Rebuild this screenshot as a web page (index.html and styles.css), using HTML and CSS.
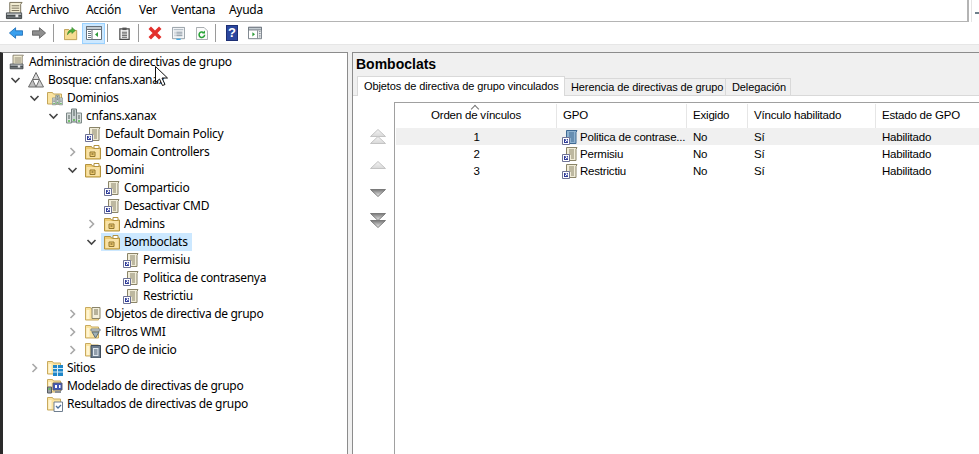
FILE: index.html
```html
<!DOCTYPE html>
<html lang="es">
<head>
    <meta charset="UTF-8">
    <title>Administración de directivas de grupo</title>
    <link rel="stylesheet" href="styles.css">
</head>
<body>
    <svg class="defs" width="0" height="0">
        <defs>
            <symbol id="open" viewBox="0 0 12 12"><path d="M2 4l4 4 4-4" fill="none" stroke="#454545" stroke-width="1.6"/></symbol>
            <symbol id="closed" viewBox="0 0 12 12"><path d="M4 2l4 4-4 4" fill="none" stroke="#a8a8a8" stroke-width="1.6"/></symbol>
            <symbol id="gpm" viewBox="0 0 20 20">
                <path d="M5 1.500h13l-1.500 2v10H5z" fill="#f1ecd2" stroke="#77705a"/>
                <path d="M7 5h8M7 7.500h8M7 10h8" stroke="#77705a"/>
                <path d="M1.500 12.500h16v3h-16z" fill="#aeb3b5" stroke="#4c5155"/>
                <path d="M1.500 15.500h16v3h-16z" fill="#6c7276" stroke="#3d4245"/>
                <path d="M11 14h3v3h-3z" fill="#e8e8e8"/>
            </symbol>
            <symbol id="gpo" viewBox="0 0 16 16">
                <path d="M4.500 1.500h10.500l-1 2V14.500H4.500z" fill="var(--paper, #f0ecd8)" stroke="var(--line, #8a8468)"/>
                <path d="M7 4h5M7 6h5M7 8h5M9 10h3M9 12h3" stroke="var(--line, #8a8468)"/>
                <path d="M.5 8.500h7v7h-7z" fill="#fff" stroke="#6f7396"/>
                <path d="M2 10h4v4H2z" fill="#2f3c9a"/>
                <path d="M3 13l2-2M3.500 10.800H5V12.500" fill="none" stroke="#fff"/>
            </symbol>
            <symbol id="ou" viewBox="0 0 16 16">
                <path d="M.5 2.500h6l1 1.500h8v11H.5z" fill="#eecb72" stroke="#b3933f"/>
                <path d="M1.500 5h13v9h-13z" fill="#f8e2a6"/>
                <path d="M9 1.500h5v3H9z" fill="#fff" stroke="#b3933f"/>
                <path d="M5 8h5v4.500H5z" fill="#eecb72" stroke="#94782f"/>
                <path d="M6.500 10h2" stroke="#5c4a1a"/>
            </symbol>
            <symbol id="servers" viewBox="0 0 16 16">
                <path d="M5.500 1h5v13h-5z" fill="#c8d0d0" stroke="#6d7a78"/>
                <path d="M.5 5h5v10h-5zM10.500 5h5v10h-5z" fill="#d8dddc" stroke="#7c8886"/>
                <path d="M7 3h2M7 5h2M7 7h2M2 8h2M2 10h2M12 8h2M12 10h2" stroke="#55625f"/>
                <path d="M2 13h2M12 13h2M7 12h2" stroke="#52b848" stroke-width="1.500"/>
            </symbol>
            <symbol id="foldersrv" viewBox="0 0 16 16">
                <path d="M.5 2.500h5l1 1.500h8v10H.5z" fill="#fbe4a0" stroke="#c4a65a"/>
                <use href="#servers" x="5" y="4" width="11" height="12"/>
            </symbol>
            <symbol id="forest" viewBox="0 0 16 16">
                <path d="M8 .5l3.500 7h-7z" fill="#d8d8d8" stroke="#6b6b6b"/>
                <path d="M4.500 7.500l3.500 7.500H.5z" fill="#bdbdbd" stroke="#6b6b6b"/>
                <path d="M11.500 7.500l4 7.500h-7.500z" fill="#cfcfcf" stroke="#6b6b6b"/>
            </symbol>
            <symbol id="folder" viewBox="0 0 16 16">
                <path d="M.5 1.500h5l1 1.500h7v11H.5z" fill="#fbe4a0" stroke="#c8aa5e"/>
                <path d="M1.500 4h3v9h-3z" fill="#fff5d2"/>
            </symbol>
            <symbol id="fold-gpo" viewBox="0 0 16 16">
                <use href="#folder" width="16" height="16"/>
                <path d="M7 1.500h8v11H7z" fill="#f3efdc" stroke="#8a8468"/>
                <path d="M9 4h4M9 6h4M9 8h4" stroke="#7a7458"/>
            </symbol>
            <symbol id="fold-wmi" viewBox="0 0 16 16">
                <use href="#folder" width="16" height="16"/>
                <path d="M6 5h9v2H6z" fill="#dfe3e5" stroke="#7b8488"/>
                <path d="M7 8h7l-3.500 6z" fill="#9fb0b6" stroke="#5e6c72"/>
            </symbol>
            <symbol id="fold-start" viewBox="0 0 16 16">
                <use href="#folder" width="16" height="16"/>
                <path d="M6 3.500h9.500V16H6z" fill="#6d7d8e" stroke="#3f4c59"/>
                <path d="M8 6h5.500v8H8z" fill="#dfe7ee"/>
                <path d="M9 8h3.500M9 10h3.500M9 12h3.500" stroke="#44566a"/>
            </symbol>
            <symbol id="fold-site" viewBox="0 0 16 16">
                <use href="#folder" width="16" height="16"/>
                <path d="M6 5h10v11H6z" fill="#1f86c8"/>
                <path d="M6 8.500h10M6 12h10M10.500 5v11" stroke="#d8eefa"/>
            </symbol>
            <symbol id="model" viewBox="0 0 16 16">
                <use href="#folder" width="16" height="16"/>
                <path d="M6 5h9v7H6z" fill="#3f57b8" stroke="#5a5f70"/>
                <path d="M8 7h2v3H8zM12 7h1.500v3H12z" fill="#fff"/>
                <path d="M.5 9h4v6h-4z" fill="#9a9fa5" stroke="#555a60"/>
                <path d="M1.500 11h2" stroke="#55c04a" stroke-width="1.500"/>
                <path d="M8 13h6v2H8z" fill="#8b9096"/>
            </symbol>
            <symbol id="result" viewBox="0 0 16 16">
                <use href="#folder" width="16" height="16"/>
                <path d="M7 6h8.500v9.500H7z" fill="#fff" stroke="#6f7f90"/>
                <path d="M9 10l2 2 3-3" fill="none" stroke="#4a6f9a" stroke-width="1.300"/>
            </symbol>
            <symbol id="back" viewBox="0 0 16 14"><path d="M.5 7L7.500 1v3.500h8v5h-8V13z" fill="var(--arrow, #3aa0ee)" stroke="var(--edge, #1f6fb8)"/></symbol>
            <symbol id="up-tri" viewBox="0 0 16 8"><path d="M8 .5L15.500 7.500H.5z" fill="url(#triUp)" stroke="#c4c4c4"/></symbol>
            <symbol id="down-tri" viewBox="0 0 16 8"><path d="M.5 .5h15L8 7.500z" fill="url(#triDown)" stroke="#7a7a7a"/></symbol>
            <linearGradient id="triUp" x1="0" y1="0" x2="0" y2="1"><stop offset="0" stop-color="#f4f4f4"/><stop offset="1" stop-color="#d8d8d8"/></linearGradient>
            <linearGradient id="triDown" x1="0" y1="0" x2="0" y2="1"><stop offset="0" stop-color="#777"/><stop offset="1" stop-color="#eee"/></linearGradient>
        </defs>
    </svg>

    <div class="topbar">
        <div class="menubar">
            <svg class="app-icon"><use href="#gpm"/></svg>
            <span class="menu m-archivo">Archivo</span>
            <span class="menu m-accion">Acción</span>
            <span class="menu m-ver">Ver</span>
            <span class="menu m-ventana">Ventana</span>
            <span class="menu">Ayuda</span>
        </div>
        <div class="corner"><span class="dash"></span></div>
    </div>

    <div class="toolbar">
        <button class="tool t-back"><svg width="16" height="14"><use href="#back"/></svg></button>
        <button class="tool t-fwd"><svg class="flip" width="16" height="14"><use href="#back"/></svg></button>
        <span class="sep"></span>
        <button class="tool t-up">
            <svg width="16" height="15" viewBox="0 0 16 15"><path d="M.5 3h5l1 1h8v10.500H.5z" fill="#f6dc92" stroke="#b9994c"/><path d="M4 9c0-4 3-6 5-6V.5L13 4 9 7.500V5.500C7 5.500 5 7 4 9z" fill="#4fae3c" stroke="#2e7d22" stroke-width=".6"/></svg>
        </button>
        <button class="tool t-active">
            <svg width="16" height="14" viewBox="0 0 16 14"><path d="M.5 .5h15v13H.5z" fill="#fff" stroke="#68717a"/><path d="M.5 .5h15v3H.5z" fill="#c4ccd2" stroke="#68717a"/><path d="M2 5.500h3M2 7.500h3M2 9.500h3M2 11.500h3" stroke="#6a7780"/><path d="M6 4v9" stroke="#68717a"/><path d="M12 6v5L9 8.500z" fill="#2f9c3a"/></svg>
        </button>
        <span class="sep"></span>
        <button class="tool t-clip">
            <svg width="13" height="15" viewBox="0 0 13 15"><path d="M1 2h11v12.500H1z" fill="#f4f4f4" stroke="#4a4a4a" stroke-width="1.400"/><path d="M4 .5h5v3H4z" fill="#555"/><path d="M3.500 6h6M3.500 8h6M3.500 10h6M3.500 12h6" stroke="#4a4a4a"/></svg>
        </button>
        <span class="sep"></span>
        <button class="tool t-del">
            <svg width="16" height="16" viewBox="0 0 16 16"><path d="M2 2l12 12M14 2L2 14" stroke="#e3312d" stroke-width="4"/></svg>
        </button>
        <button class="tool t-prop">
            <svg width="15" height="15" viewBox="0 0 15 15"><path d="M.5 .5h14v13H.5z" fill="#f3f5f7" stroke="#8a949c"/><path d="M2 3h11" stroke="#b7c0c7" stroke-width="1.500"/><path d="M3 6h1M5 6h7M3 8h1M5 8h7M3 10h1M5 10h7" stroke="#7b8a96"/><path d="M5 14.200h5" stroke="#39a7e6" stroke-width="1.500"/></svg>
        </button>
        <button class="tool t-ref">
            <svg width="14" height="15" viewBox="0 0 14 15"><path d="M.5 .5h9l4 4v10H.5z" fill="#fbfbfb" stroke="#9aa0a4"/><path d="M10 9a3.200 3.200 0 1 1-1-2.300" fill="none" stroke="#27a336" stroke-width="1.800"/><path d="M10.500 4v3.500H7z" fill="#27a336"/></svg>
        </button>
        <span class="sep"></span>
        <button class="tool t-help"><span class="help-icon">?</span></button>
        <button class="tool t-show">
            <svg width="16" height="14" viewBox="0 0 16 14"><path d="M.5 .5h15v13H.5z" fill="#fff" stroke="#68717a"/><path d="M.5 .5h15v3H.5z" fill="#c4ccd2" stroke="#68717a"/><path d="M11 4v9" stroke="#68717a"/><path d="M12.500 5.500h2M12.500 7.500h2M12.500 9.500h2M12.500 11.500h2" stroke="#6a7780"/><path d="M5 6v5l3-2.500z" fill="#2f9c3a"/></svg>
        </button>
    </div>

    <div class="workspace">
        <div class="tree-panel">
            <div class="row lv0"><span class="node"><svg class="ico"><use href="#gpm"/></svg>Administración de directivas de grupo</span></div>
            <div class="row lv1"><svg class="tw"><use href="#open"/></svg><span class="node"><svg class="ico"><use href="#forest"/></svg>Bosque: cnfans.xanax</span></div>
            <div class="row lv2"><svg class="tw"><use href="#open"/></svg><span class="node"><svg class="ico"><use href="#foldersrv"/></svg>Dominios</span></div>
            <div class="row lv3"><svg class="tw"><use href="#open"/></svg><span class="node"><svg class="ico"><use href="#servers"/></svg>cnfans.xanax</span></div>
            <div class="row lv4"><span class="tw"></span><span class="node"><svg class="ico"><use href="#gpo"/></svg>Default Domain Policy</span></div>
            <div class="row lv4"><svg class="tw"><use href="#closed"/></svg><span class="node"><svg class="ico"><use href="#ou"/></svg>Domain Controllers</span></div>
            <div class="row lv4"><svg class="tw"><use href="#open"/></svg><span class="node"><svg class="ico"><use href="#ou"/></svg>Domini</span></div>
            <div class="row lv5"><span class="tw"></span><span class="node"><svg class="ico"><use href="#gpo"/></svg>Comparticio</span></div>
            <div class="row lv5"><span class="tw"></span><span class="node"><svg class="ico"><use href="#gpo"/></svg>Desactivar CMD</span></div>
            <div class="row lv5"><svg class="tw"><use href="#closed"/></svg><span class="node"><svg class="ico"><use href="#ou"/></svg>Admins</span></div>
            <div class="row lv5"><svg class="tw"><use href="#open"/></svg><span class="node selected"><svg class="ico"><use href="#ou"/></svg>Bomboclats</span></div>
            <div class="row lv6"><span class="tw"></span><span class="node"><svg class="ico"><use href="#gpo"/></svg>Permisiu</span></div>
            <div class="row lv6"><span class="tw"></span><span class="node"><svg class="ico"><use href="#gpo"/></svg>Politica de contrasenya</span></div>
            <div class="row lv6"><span class="tw"></span><span class="node"><svg class="ico"><use href="#gpo"/></svg>Restrictiu</span></div>
            <div class="row lv4"><svg class="tw"><use href="#closed"/></svg><span class="node"><svg class="ico"><use href="#fold-gpo"/></svg>Objetos de directiva de grupo</span></div>
            <div class="row lv4"><svg class="tw"><use href="#closed"/></svg><span class="node"><svg class="ico"><use href="#fold-wmi"/></svg>Filtros WMI</span></div>
            <div class="row lv4"><svg class="tw"><use href="#closed"/></svg><span class="node"><svg class="ico"><use href="#fold-start"/></svg>GPO de inicio</span></div>
            <div class="row lv2"><svg class="tw"><use href="#closed"/></svg><span class="node"><svg class="ico"><use href="#fold-site"/></svg>Sitios</span></div>
            <div class="row lv2"><span class="tw"></span><span class="node"><svg class="ico"><use href="#model"/></svg>Modelado de directivas de grupo</span></div>
            <div class="row lv2"><span class="tw"></span><span class="node"><svg class="ico"><use href="#result"/></svg>Resultados de directivas de grupo</span></div>
        </div>

        <div class="detail-panel">
            <h1 class="detail-title">Bomboclats</h1>
            <div class="tabs">
                <span class="tab active">Objetos de directiva de grupo vinculados</span>
                <span class="tab t-her">Herencia de directivas de grupo</span>
                <span class="tab t-del-tab">Delegación</span>
            </div>
            <div class="tab-body">
                <div class="order-btns">
                    <svg class="arrow-btn" viewBox="0 0 16 16"><use href="#up-tri" width="16" height="8"/><use href="#up-tri" y="7" width="16" height="8"/></svg>
                    <svg class="arrow-btn" viewBox="0 0 16 16"><use href="#up-tri" y="4" width="16" height="8"/></svg>
                    <svg class="arrow-btn" viewBox="0 0 16 16"><use href="#down-tri" y="4" width="16" height="8"/></svg>
                    <svg class="arrow-btn" viewBox="0 0 16 16"><use href="#down-tri" width="16" height="8"/><use href="#down-tri" y="7" width="16" height="8"/></svg>
                </div>
                <div class="links">
                    <div class="line head">
                        <span class="cell center sort">Orden de vínculos</span>
                        <span class="cell">GPO</span>
                        <span class="cell">Exigido</span>
                        <span class="cell">Vínculo habilitado</span>
                        <span class="cell">Estado de GPO</span>
                    </div>
                    <div class="line item current">
                        <span class="cell center">1</span>
                        <span class="cell gpo-cell"><svg class="ico-small"><use href="#gpo"/></svg>Politica de contrase...</span>
                        <span class="cell">No</span>
                        <span class="cell">Sí</span>
                        <span class="cell">Habilitado</span>
                    </div>
                    <div class="line item">
                        <span class="cell center">2</span>
                        <span class="cell gpo-cell"><svg class="ico-small"><use href="#gpo"/></svg>Permisiu</span>
                        <span class="cell">No</span>
                        <span class="cell">Sí</span>
                        <span class="cell">Habilitado</span>
                    </div>
                    <div class="line item">
                        <span class="cell center">3</span>
                        <span class="cell gpo-cell"><svg class="ico-small"><use href="#gpo"/></svg>Restrictiu</span>
                        <span class="cell">No</span>
                        <span class="cell">Sí</span>
                        <span class="cell">Habilitado</span>
                    </div>
                </div>
            </div>
        </div>
    </div>

    <svg class="cursor" width="13" height="21" viewBox="0 0 13 21"><path d="M.5 .5v16l4-3.500 3 6.500 2.500-1-3-6.500h5.500z" fill="#fff" stroke="#111"/></svg>
</body>
</html>
```

FILE: styles.css
```css
* {
    box-sizing: border-box;
}
html, body {
    margin: 0;
    height: 454px;
    overflow: hidden;
}
body {
    font-family: "Noto Sans", sans-serif;
    font-size: 12px;
    letter-spacing: -.3px;
    color: #000;
    background: #f0f0f0;
    display: flex;
    flex-direction: column;
    position: relative;
}
.defs {
    position: absolute;
}

/* menu */
.topbar {
    display: flex;
    height: 22px;
    background: #fff;
}
.menubar {
    width: 969px;
    display: flex;
    align-items: center;
    padding: 0 0 1px 5px;
    border-bottom: 1px solid #b4b4b4;
    border-right: 2px solid #b4b4b4;
}
.app-icon {
    width: 19px;
    height: 19px;
    margin-right: 5px;
}
.menu {
    line-height: 18px;
}
.m-archivo { width: 57px; }
.m-accion { width: 53px; }
.m-ver { width: 32px; }
.m-ventana { width: 58px; }
.corner {
    flex: 1;
    margin-left: 2px;
    border-left: 1px solid #e4e4e4;
    padding: 12px 0 0 3px;
}
.dash {
    display: block;
    height: 2px;
    background: #6f7f8a;
}

/* toolbar */
.toolbar {
    display: flex;
    align-items: center;
    height: 23px;
    background: #fff;
    border-bottom: 1px solid #e6e6e6;
}
.tool {
    border: 1px solid transparent;
    background: none;
    padding: 0;
    height: 21px;
    display: flex;
    align-items: center;
    justify-content: center;
}
.sep {
    width: 1px;
    height: 18px;
    background: #9a9a9a;
}
.flip {
    transform: scaleX(-1);
    --arrow: #8f8f8f;
    --edge: #5f5f5f;
}
.t-back { width: 16px; margin-left: 8px; }
.t-fwd { width: 16px; margin-left: 7px; margin-right: 6px; }
.t-up { width: 16px; margin-left: 9px; margin-right: 3px; }
.t-active {
    width: 23px;
    background: #cce8ff;
    border-color: #99d1ff;
    margin-right: 2px;
}
.t-clip { width: 13px; margin-left: 10px; margin-right: 7px; }
.t-del { width: 16px; margin-left: 8px; }
.t-prop { width: 15px; margin-left: 8px; }
.t-ref { width: 14px; margin-left: 9px; margin-right: 6px; }
.t-help { width: 14px; margin-left: 9px; }
.t-show { width: 16px; margin-left: 8px; }
.help-icon {
    width: 14px;
    height: 16px;
    background: #2b479f;
    border: 1px solid #1d2f73;
    color: #fff;
    font: bold 13px/14px "Liberation Sans", sans-serif;
    text-align: center;
}

/* panels */
.workspace {
    flex: 1;
    display: flex;
    gap: 4px;
    padding-top: 7px;
    min-height: 0;
}
.tree-panel {
    width: 348px;
    background: #fff;
    border: 1px solid #8c8c8c;
    border-left: 3px solid #2a2a2a;
    border-bottom: 0;
}
.row {
    display: flex;
    align-items: center;
    height: 18px;
    white-space: nowrap;
    line-height: 18px;
}
.lv0 { padding-left: 3px; }
.lv1 { padding-left: 3px; }
.lv2 { padding-left: 22px; }
.lv3 { padding-left: 41px; }
.lv4 { padding-left: 60px; }
.lv5 { padding-left: 79px; }
.lv6 { padding-left: 98px; }
.lv0 .node { padding-left: 3px; }
.tw {
    width: 19px;
    height: 12px;
    flex: none;
}
.node {
    display: flex;
    align-items: center;
    height: 18px;
    padding: 0 4px 0 3px;
}
.selected {
    background: #cce8ff;
}
.ico {
    width: 16px;
    height: 16px;
    margin-right: 4px;
    flex: none;
}
.detail-panel {
    flex: 1;
    min-width: 0;
    display: flex;
    flex-direction: column;
    border-top: 1px solid #8c8c8c;
    border-left: 1px solid #8c8c8c;
}
.detail-title {
    margin: 0;
    padding: 3px 0 0 3px;
    height: 24px;
    font-family: "Liberation Sans", sans-serif;
    font-size: 14px;
    letter-spacing: 0;
    line-height: 17px;
    font-weight: bold;
}
.tabs {
    display: flex;
    height: 19px;
    padding-left: 4px;
    border-bottom: 1px solid #d9d9d9;
    font-family: "Liberation Sans", sans-serif;
    font-size: 11px;
    letter-spacing: -.1px;
    white-space: nowrap;
}
.tab {
    height: 18px;
    margin-top: 1px;
    border: 1px solid #d9d9d9;
    border-left: 0;
    line-height: 17px;
    padding: 0 6px;
}
.tab.active {
    width: 208px;
    height: 20px;
    margin-top: -1px;
    background: #fff;
    border-left: 1px solid #d9d9d9;
    border-bottom: 0;
    padding-left: 6px;
    line-height: 18px;
    position: relative;
}
.t-her { width: 161px; }
.t-del-tab { width: 65px; }
.tab-body {
    flex: 1;
    display: flex;
    background: #fff;
    padding-top: 6px;
    min-height: 0;
}
.order-btns {
    width: 41px;
    flex: none;
    display: flex;
    flex-direction: column;
    align-items: center;
    padding: 27px 0 0 9px;
    gap: 12px;
}
.arrow-btn {
    width: 16px;
    height: 16px;
}
.links {
    flex: 1;
    border-top: 1px solid #a0a0a0;
    border-left: 1px solid #a0a0a0;
    padding-left: 1px;
    font-family: "Liberation Sans", sans-serif;
    font-size: 11.500px;
    letter-spacing: -.2px;
}
.line {
    display: grid;
    grid-template-columns: 161px 130px 61px 128px 1fr;
}
.head {
    height: 25px;
    line-height: 23px;
    padding-top: 1px;
}
.head .cell {
    border-right: 1px solid #e6e6e6;
}
.head .cell:last-child {
    border-right: 0;
}
.item {
    height: 17px;
    line-height: 18px;
}
.current {
    background: #f0f0f0;
    --paper: #8fb2d0;
    --line: #3f6a94;
}
.cell {
    padding-left: 6px;
    white-space: nowrap;
    overflow: hidden;
    position: relative;
}
.center {
    text-align: center;
    padding-left: 0;
}
.sort::before {
    content: "";
    position: absolute;
    left: 76px;
    top: 2px;
    width: 5px;
    height: 5px;
    border-top: 1px solid #777;
    border-left: 1px solid #777;
    transform: rotate(45deg);
}
.gpo-cell {
    display: flex;
    align-items: center;
    padding-left: 5px;
}
.ico-small {
    width: 16px;
    height: 16px;
    margin-right: 2px;
    flex: none;
}
.cursor {
    position: absolute;
    left: 155px;
    top: 66px;
}
```
